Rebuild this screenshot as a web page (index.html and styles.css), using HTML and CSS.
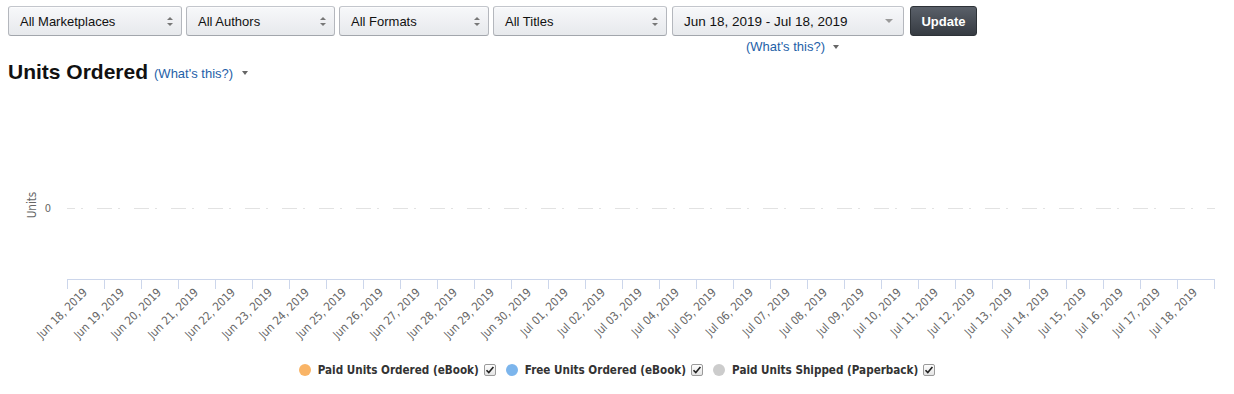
FILE: index.html
```html
<!DOCTYPE html>
<html>
<head>
<meta charset="utf-8">
<link rel="stylesheet" href="styles.css">
</head>
<body>
<div class="filters">
  <div class="select w174"><span>All Marketplaces</span><span class="updown"></span></div>
  <div class="select w149"><span>All Authors</span><span class="updown"></span></div>
  <div class="select w150"><span>All Formats</span><span class="updown"></span></div>
  <div class="select w174"><span>All Titles</span><span class="updown"></span></div>
  <div class="datecol">
    <div class="select date"><span>Jun 18, 2019 - Jul 18, 2019</span><span class="down"></span></div>
    <div class="hint"><a class="link">(What's this?)</a><span class="caret"></span></div>
  </div>
  <button class="update">Update</button>
</div>
<div class="titlerow">
  <h1 class="title">Units Ordered</h1>
  <a class="link">(What's this?)</a><span class="caret"></span>
</div>
<svg class="chart" width="1234" height="265" viewBox="0 0 1234 265" xmlns="http://www.w3.org/2000/svg">
  <line x1="67" y1="118.5" x2="1215" y2="118.5" class="grid"/>
  <text class="ylabel" x="51" y="122">0</text>
  <text class="ytitle" x="36" y="115" transform="rotate(-90 36 115)">Units</text>
  <line x1="67" y1="189.5" x2="1215" y2="189.5" class="axis"/>
  <path class="axis" d="M67.5 189v10M104.5 189v10M141.5 189v10M178.5 189v10M215.5 189v10M252.5 189v10M289.5 189v10M326.5 189v10M363.5 189v10M400.5 189v10M437.5 189v10M474.5 189v10M511.5 189v10M548.5 189v10M585.5 189v10M622.5 189v10M659.5 189v10M696.5 189v10M733.5 189v10M770.5 189v10M807.5 189v10M844.5 189v10M881.5 189v10M918.5 189v10M955.5 189v10M992.5 189v10M1029.5 189v10M1066.5 189v10M1103.5 189v10M1140.5 189v10M1177.5 189v10M1214.5 189v10"/>
  <g class="xl">
    <text x="88" y="203" transform="rotate(-45 88 203)">Jun 18, 2019</text>
    <text x="125" y="203" transform="rotate(-45 125 203)">Jun 19, 2019</text>
    <text x="162" y="203" transform="rotate(-45 162 203)">Jun 20, 2019</text>
    <text x="199" y="203" transform="rotate(-45 199 203)">Jun 21, 2019</text>
    <text x="236" y="203" transform="rotate(-45 236 203)">Jun 22, 2019</text>
    <text x="273" y="203" transform="rotate(-45 273 203)">Jun 23, 2019</text>
    <text x="310" y="203" transform="rotate(-45 310 203)">Jun 24, 2019</text>
    <text x="347" y="203" transform="rotate(-45 347 203)">Jun 25, 2019</text>
    <text x="384" y="203" transform="rotate(-45 384 203)">Jun 26, 2019</text>
    <text x="421" y="203" transform="rotate(-45 421 203)">Jun 27, 2019</text>
    <text x="458" y="203" transform="rotate(-45 458 203)">Jun 28, 2019</text>
    <text x="495" y="203" transform="rotate(-45 495 203)">Jun 29, 2019</text>
    <text x="532" y="203" transform="rotate(-45 532 203)">Jun 30, 2019</text>
    <text x="569" y="203" transform="rotate(-45 569 203)">Jul 01, 2019</text>
    <text x="606" y="203" transform="rotate(-45 606 203)">Jul 02, 2019</text>
    <text x="643" y="203" transform="rotate(-45 643 203)">Jul 03, 2019</text>
    <text x="680" y="203" transform="rotate(-45 680 203)">Jul 04, 2019</text>
    <text x="717" y="203" transform="rotate(-45 717 203)">Jul 05, 2019</text>
    <text x="754" y="203" transform="rotate(-45 754 203)">Jul 06, 2019</text>
    <text x="791" y="203" transform="rotate(-45 791 203)">Jul 07, 2019</text>
    <text x="828" y="203" transform="rotate(-45 828 203)">Jul 08, 2019</text>
    <text x="865" y="203" transform="rotate(-45 865 203)">Jul 09, 2019</text>
    <text x="902" y="203" transform="rotate(-45 902 203)">Jul 10, 2019</text>
    <text x="939" y="203" transform="rotate(-45 939 203)">Jul 11, 2019</text>
    <text x="976" y="203" transform="rotate(-45 976 203)">Jul 12, 2019</text>
    <text x="1013" y="203" transform="rotate(-45 1013 203)">Jul 13, 2019</text>
    <text x="1050" y="203" transform="rotate(-45 1050 203)">Jul 14, 2019</text>
    <text x="1087" y="203" transform="rotate(-45 1087 203)">Jul 15, 2019</text>
    <text x="1124" y="203" transform="rotate(-45 1124 203)">Jul 16, 2019</text>
    <text x="1161" y="203" transform="rotate(-45 1161 203)">Jul 17, 2019</text>
    <text x="1198" y="203" transform="rotate(-45 1198 203)">Jul 18, 2019</text>
  </g>
</svg>
<div class="legend">
  <div class="item"><span class="dot orange"></span><span class="ltext">Paid Units Ordered (eBook)</span><span class="cb"><svg width="10" height="10" viewBox="0 0 10 10"><path d="M1.5 5.2l2.3 2.4 4.6-5.6" fill="none" stroke="#222" stroke-width="1.6"/></svg></span></div>
  <div class="item"><span class="dot blue"></span><span class="ltext">Free Units Ordered (eBook)</span><span class="cb"><svg width="10" height="10" viewBox="0 0 10 10"><path d="M1.5 5.2l2.3 2.4 4.6-5.6" fill="none" stroke="#222" stroke-width="1.6"/></svg></span></div>
  <div class="item"><span class="dot gray"></span><span class="ltext">Paid Units Shipped (Paperback)</span><span class="cb"><svg width="10" height="10" viewBox="0 0 10 10"><path d="M1.5 5.2l2.3 2.4 4.6-5.6" fill="none" stroke="#222" stroke-width="1.6"/></svg></span></div>
</div>
</body>
</html>
```

FILE: styles.css
```css
html, body {
  margin: 0;
  padding: 0;
  background: #fff;
  font-family: "Liberation Sans", Arial, sans-serif;
  color: #111;
}
.filters {
  display: flex;
  align-items: flex-start;
  padding: 6px 0 0 8px;
}
.select {
  box-sizing: border-box;
  height: 30px;
  display: flex;
  align-items: center;
  justify-content: space-between;
  padding: 0 8px 0 11px;
  border: 1px solid #adb1b8;
  border-color: #c3c6cc #b4b7bd #a2a6ac;
  border-radius: 3px;
  background: linear-gradient(to bottom, #f7f8fa, #e7e9ec);
  box-shadow: inset 0 1px 0 rgba(255,255,255,.6);
  font-size: 13px;
  color: #111;
  margin-right: 4px;
}
.w174 { width: 174px; }
.w149 { width: 149px; }
.w150 { width: 150px; }
.updown {
  position: relative;
  width: 6px;
  height: 9px;
}
.updown::before, .updown::after {
  content: "";
  position: absolute;
  left: 0;
  border-left: 3px solid transparent;
  border-right: 3px solid transparent;
}
.updown::before { top: 0; border-bottom: 3px solid #777; }
.updown::after { bottom: 0; border-top: 3px solid #777; }
.datecol {
  display: flex;
  flex-direction: column;
  align-items: center;
  margin-left: 1px;
  margin-right: 6px;
}
.select.date {
  width: 232px;
  margin-right: 0;
  padding: 0 10px 0 11px;
  font-size: 13.5px;
}
.down {
  width: 0;
  height: 0;
  border-left: 4px solid transparent;
  border-right: 4px solid transparent;
  border-top: 4px solid #9a9a9a;
}
.hint {
  display: flex;
  align-items: center;
  margin-top: 3px;
  line-height: 16px;
  padding-left: 9px;
}
.link {
  color: #1e61a8;
  font-size: 13px;
  text-decoration: none;
}
.caret {
  display: inline-block;
  width: 0;
  height: 0;
  margin-left: 8px;
  border-left: 3.5px solid transparent;
  border-right: 3.5px solid transparent;
  border-top: 4px solid #666;
}
.update {
  box-sizing: border-box;
  height: 30px;
  width: 67px;
  border: 1px solid #2d3237;
  border-radius: 3px;
  background: linear-gradient(to bottom, #5a6069, #363b42);
  color: #fff;
  font-family: "Liberation Sans", Arial, sans-serif;
  font-weight: bold;
  font-size: 13px;
  padding: 0;
}
.titlerow {
  display: flex;
  align-items: center;
  padding-left: 8px;
  margin-top: 5px;
  height: 24px;
}
.title {
  margin: 0 6px 0 0;
  font-size: 21px;
  line-height: 24px;
  font-weight: bold;
  color: #111;
}
.titlerow .link { margin-top: 2px; }
.titlerow .caret { margin-left: 9px; margin-top: 2px; }
.chart {
  display: block;
  margin-top: 6px;
}
.grid {
  stroke: #e2e2e2;
  stroke-width: 1;
  stroke-dasharray: 15 6 2 14;
  stroke-dashoffset: 7;
}
.axis {
  stroke: #ccd6eb;
  stroke-width: 1;
  fill: none;
}
.ylabel {
  font-family: "DejaVu Sans Condensed", "DejaVu Sans", sans-serif;
  font-stretch: condensed;
  font-size: 11px;
  fill: #666;
  text-anchor: end;
}
.ytitle {
  font-family: "DejaVu Sans Condensed", "DejaVu Sans", sans-serif;
  font-stretch: condensed;
  font-size: 11.5px;
  fill: #666;
  text-anchor: middle;
}
.xl text {
  font-family: "DejaVu Sans Condensed", "DejaVu Sans", sans-serif;
  font-stretch: condensed;
  font-size: 11.5px;
  fill: #666;
  text-anchor: end;
}
.legend {
  display: flex;
  justify-content: center;
  margin-top: 7px;
  font-family: "DejaVu Sans Condensed", "DejaVu Sans", sans-serif;
  font-stretch: condensed;
  font-weight: bold;
  font-size: 11.6px;
  color: #333;
  line-height: 16px;
}
.item {
  display: flex;
  align-items: center;
  margin: 0 5px;
}
.dot {
  width: 12px;
  height: 12px;
  border-radius: 50%;
  margin-right: 7px;
}
.orange { background: #f9b466; }
.blue { background: #7cb5ec; }
.gray { background: #cccccc; }
.cb {
  box-sizing: border-box;
  width: 12px;
  height: 12px;
  margin-left: 5px;
  border: 1px solid #9a9a9a;
  border-radius: 2px;
  background: linear-gradient(to bottom, #fdfdfd, #e4e4e4);
  display: flex;
  align-items: center;
  justify-content: center;
}
.cb svg { display: block; }
```
